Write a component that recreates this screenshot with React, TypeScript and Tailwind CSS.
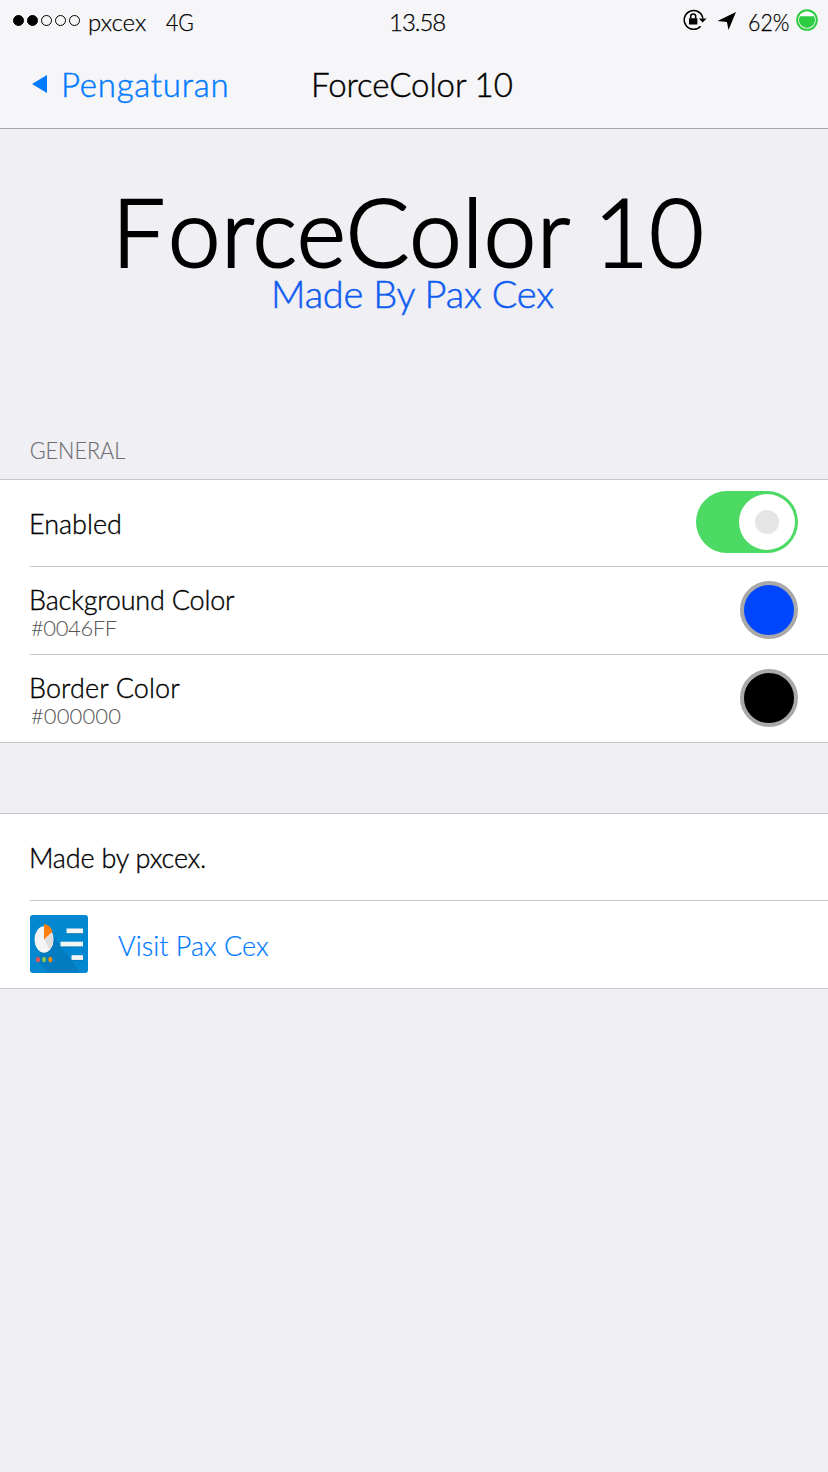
import type { ReactNode } from "react";

function SignalDots() {
  return (
    <div className="flex gap-[3px] ml-[13px] -mt-[2px]">
      {[true, true, false, false, false].map((on, i) => (
        <span
          key={i}
          className={
            on
              ? "size-[11px] rounded-full border border-black bg-black"
              : "size-[11px] rounded-full border border-black"
          }
        />
      ))}
    </div>
  );
}

function RotationLock() {
  return (
    <svg width="24" height="22" viewBox="0 0 24 22" className="block">
      <path d="M17.6 17.2A9.4 9.4 0 1 1 19.9 9.5" fill="none" stroke="#000" strokeWidth="1.5" />
      <path d="M15.800 9.500H23.600L19.700 13.500Z" fill="#000" />
      <rect x="6" y="9.200" width="8.400" height="6.400" rx="0.500" fill="#000" />
      <path d="M7.700 9.500V7.600a2.500 2.500 0 0 1 5 0V9.500" fill="none" stroke="#000" strokeWidth="1.500" />
    </svg>
  );
}

function StatusBar() {
  return (
    <div className="grid h-10 grid-cols-[1fr_auto_1fr] text-2xl leading-[43px] [-webkit-text-stroke:0.25px]">
      <div className="flex items-center">
        <SignalDots />
        <span className="ml-[8px]">pxcex</span>
        <span className="ml-[20px] w-[30px] origin-left scale-x-[0.88]">4G</span>
      </div>
      <span className="ml-[10px] w-[62px] tracking-[-1px] pl-[1px]">13.58</span>
      <div className="flex items-center justify-end pr-[10px]">
        <span className="-mt-[3px]">
          <RotationLock />
        </span>
        <svg width="20" height="20" viewBox="0 0 20 20" className="ml-[10px] -mt-[2px]">
          <path d="M19 1L11.500 19L9.900 10.900L0.500 9.900Z" fill="#000" />
        </svg>
        <span className="ml-[11px] w-[48px] origin-left scale-x-[0.89]">62%</span>
        <svg width="22" height="22" viewBox="0 0 22 22" className="-mt-[3px]">
          <circle cx="11" cy="11" r="9.800" fill="#fff" stroke="#2ecc40" strokeWidth="2" />
          <path d="M3.900 7.200H18.100A8 8 0 1 1 3.900 7.200Z" fill="#2ecc40" />
        </svg>
      </div>
    </div>
  );
}

function NavBar() {
  return (
    <div className="flex h-[88px] text-[33px] leading-[88px] [-webkit-text-stroke:0.45px]">
      <div className="flex w-[311px] items-center pl-8 text-[#007aff]">
        <svg width="15" height="18" viewBox="0 0 15 18">
          <path d="M0 9L15 0V18Z" fill="currentColor" />
        </svg>
        <span className="ml-[14px] -mt-px tracking-[0.75px]">Pengaturan</span>
      </div>
      <h1 className="tracking-[-0.1px]">ForceColor 10</h1>
    </div>
  );
}

function Group({ children, className }: { children: ReactNode; className?: string }) {
  return (
    <section className={`border-y border-[#c8c7cc] bg-white pl-[30px] ${className ?? ""}`}>
      {children}
    </section>
  );
}

function Row({ children, className }: { children: ReactNode; className: string }) {
  return (
    <div
      className={`flex items-center justify-between border-b border-[#c8c7cc] pr-[30px] last:border-b-0 ${className}`}
    >
      {children}
    </div>
  );
}

function Toggle() {
  return (
    <div className="-mt-[2px] flex h-[62px] w-[102px] items-center justify-end rounded-full bg-[#4cd964] pr-[3px]">
      <div className="flex size-[56px] items-center justify-center rounded-full bg-white">
        <div className="size-6 rounded-full bg-[#e5e5e5]" />
      </div>
    </div>
  );
}

type ColorRowProps = {
  name: string;
  hex: string;
  height: string;
  swatch: string;
  tracking: string;
  hexTracking: string;
};

function ColorRow({ name, hex, height, swatch, tracking, hexTracking }: ColorRowProps) {
  return (
    <Row className={height}>
      <div className="self-start pt-[17px]">
        <div className={`leading-[32px] ${tracking}`}>{name}</div>
        <div className={`ml-[1px] text-[22px] leading-[23px] text-[#555] [-webkit-text-stroke:0px] ${hexTracking}`}>
          {hex}
        </div>
      </div>
      <div className={`mt-[14px] size-[58px] self-start rounded-full border-4 border-[#a9a9a9] ${swatch}`} />
    </Row>
  );
}

function AppIcon() {
  return (
    <svg width="58" height="58" viewBox="0 0 58 58" className="-mt-[2px]">
      <rect width="58" height="58" rx="3" fill="#0288d1" />
      <path d="M22 19L50 57H18L7 45Z" fill="#027bc0" />
      <ellipse cx="14" cy="25.500" rx="9.500" ry="13.200" fill="#0277b5" opacity="0.6" />
      <ellipse cx="14" cy="24.500" rx="9.500" ry="13.200" fill="#f5f5f5" />
      <path d="M14 24.500L22 17.400Q25.500 26 19.800 34.500Z" fill="#dedede" />
      <path d="M14 24.500V9Q20 9.600 22.600 16.400Z" fill="#ff7f0e" />
      <ellipse cx="8" cy="44.500" rx="2" ry="2.700" fill="#ef5350" />
      <ellipse cx="14" cy="44.500" rx="2" ry="2.700" fill="#8bc34a" />
      <ellipse cx="20.300" cy="44.500" rx="2" ry="2.700" fill="#fb8c00" />
      <g fill="#0277b5">
        <rect x="36.500" y="14.800" width="16.500" height="4.500" />
        <rect x="30.500" y="27.800" width="22.500" height="4.500" />
        <rect x="41.500" y="41.300" width="11.500" height="4.500" />
      </g>
      <g fill="#f5f5f5">
        <rect x="36.500" y="13.500" width="16.500" height="4.700" />
        <rect x="30.500" y="26.700" width="22.500" height="4.700" />
        <rect x="41.500" y="40.200" width="11.500" height="4.700" />
      </g>
    </svg>
  );
}

export default function App() {
  return (
    <div className="h-[1472px] w-[828px] overflow-hidden bg-[#efeff4] font-['Lato',sans-serif] font-light whitespace-nowrap text-black">
      <header className="h-[129px] border-b border-[#a7a7ab] bg-[#f6f6f8]">
        <StatusBar />
        <NavBar />
      </header>

      <div className="flex h-[304px] flex-col pt-[57px]">
        <h2 className="pl-[112px] text-[94px] leading-[90px] tracking-[0.7px] [word-spacing:-1px] [-webkit-text-stroke:2.2px]">
          <span className="tracking-[3px]">F</span>orceColor 10
        </h2>
        <p className="pl-[271px] text-[38px] leading-[34px] tracking-[-0.2px] text-[#0f5cf0] [-webkit-text-stroke:0.5px]">
          Made By Pax Cex
        </p>
      </div>

      <h3 className="h-[46px] w-[120px] origin-left scale-x-[0.9] pl-[33px] text-2xl leading-[34px] text-[#6d6d72] [-webkit-text-stroke:0.15px]">
        GENERAL
      </h3>

      <main className="text-[27px] [-webkit-text-stroke:0.35px]">
        <Group>
          <Row className="h-[87px]">
            <span className="-ml-[1px] mt-[2px]">Enabled</span>
            <Toggle />
          </Row>
          <ColorRow
            name="Background Color"
            hex="#0046FF"
            height="h-[88px]"
            swatch="bg-[#0046ff]"
            tracking="-ml-px tracking-[-0.2px]"
            hexTracking="tracking-[-0.4px]"
          />
          <ColorRow
            name="Border Color"
            hex="#000000"
            height="h-[87px]"
            swatch="bg-black"
            tracking="-ml-px tracking-[0.1px]"
            hexTracking="tracking-[0.1px]"
          />
        </Group>

        <Group className="mt-[70px]">
          <Row className="h-[87px]">
            <span className="-ml-[1px] mt-[2px] tracking-[-0.2px]">Made by pxcex.</span>
          </Row>
          <Row className="h-[87px]">
            <div className="flex items-center">
              <AppIcon />
              <span className="mt-[3px] ml-[30px] text-[#007aff] [-webkit-text-stroke:0.2px]">Visit Pax Cex</span>
            </div>
          </Row>
        </Group>
      </main>
    </div>
  );
}
